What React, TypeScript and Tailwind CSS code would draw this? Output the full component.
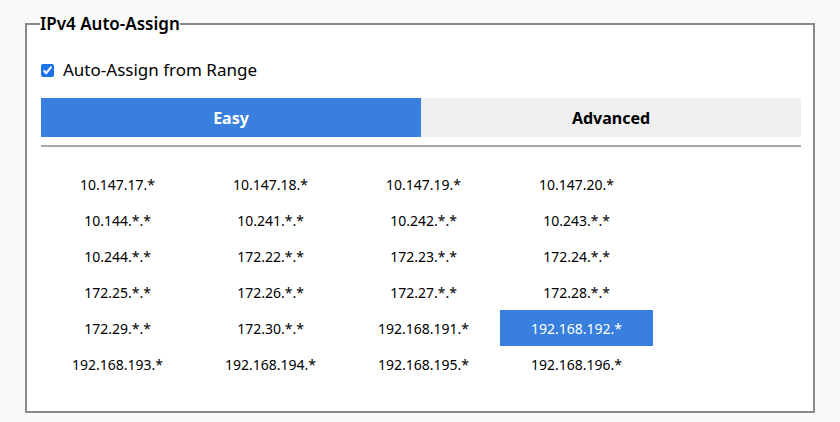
import React from "react";

const ranges = [
  "10.147.17.*", "10.147.18.*", "10.147.19.*", "10.147.20.*",
  "10.144.*.*", "10.241.*.*", "10.242.*.*", "10.243.*.*",
  "10.244.*.*", "172.22.*.*", "172.23.*.*", "172.24.*.*",
  "172.25.*.*", "172.26.*.*", "172.27.*.*", "172.28.*.*",
  "172.29.*.*", "172.30.*.*", "192.168.191.*", "192.168.192.*",
  "192.168.193.*", "192.168.194.*", "192.168.195.*", "192.168.196.*",
];

export default function App() {
  return (
    <div
      className="w-[840px] h-[422px] bg-[#f9f9f9] pl-[25px] pt-[12px] text-black"
      style={{ fontFamily: '"Noto Sans", "Segoe UI", sans-serif' }}
    >
      <fieldset className="w-[790px] h-[401px] border-2 border-[#8a8a8a] bg-white pl-[14px] pr-[12px]">
        <legend className="p-0 text-[17px] leading-[24px] font-semibold -ml-[1px]">IPv4 Auto-Assign</legend>
        <label className="mt-[22px] flex h-[24px] items-center gap-[9px] text-[17px]">
          <input type="checkbox" defaultChecked className="m-0 h-[13px] w-[13px] accent-[#1a73e8]" />
          <span>Auto-Assign from Range</span>
        </label>
        <div className="mt-[16px] flex h-[39px]">
          <button className="flex-1 bg-[#397fde] text-[16px] font-bold text-white">Easy</button>
          <button className="flex-1 bg-[#efefef] text-[16px] font-bold text-black">Advanced</button>
        </div>
        <div className="mt-[8px] h-[2px] bg-[#a8a8a8]" />
        <div className="mt-[19px] grid w-[612px] grid-cols-4">
          {ranges.map((r) => (
            <div
              key={r}
              className={
                "flex h-[36px] items-center justify-center text-[14px] " +
                (r === "192.168.192.*" ? "bg-[#397fde] text-white" : "")
              }
            >
              {r}
            </div>
          ))}
        </div>
      </fieldset>
    </div>
  );
}
